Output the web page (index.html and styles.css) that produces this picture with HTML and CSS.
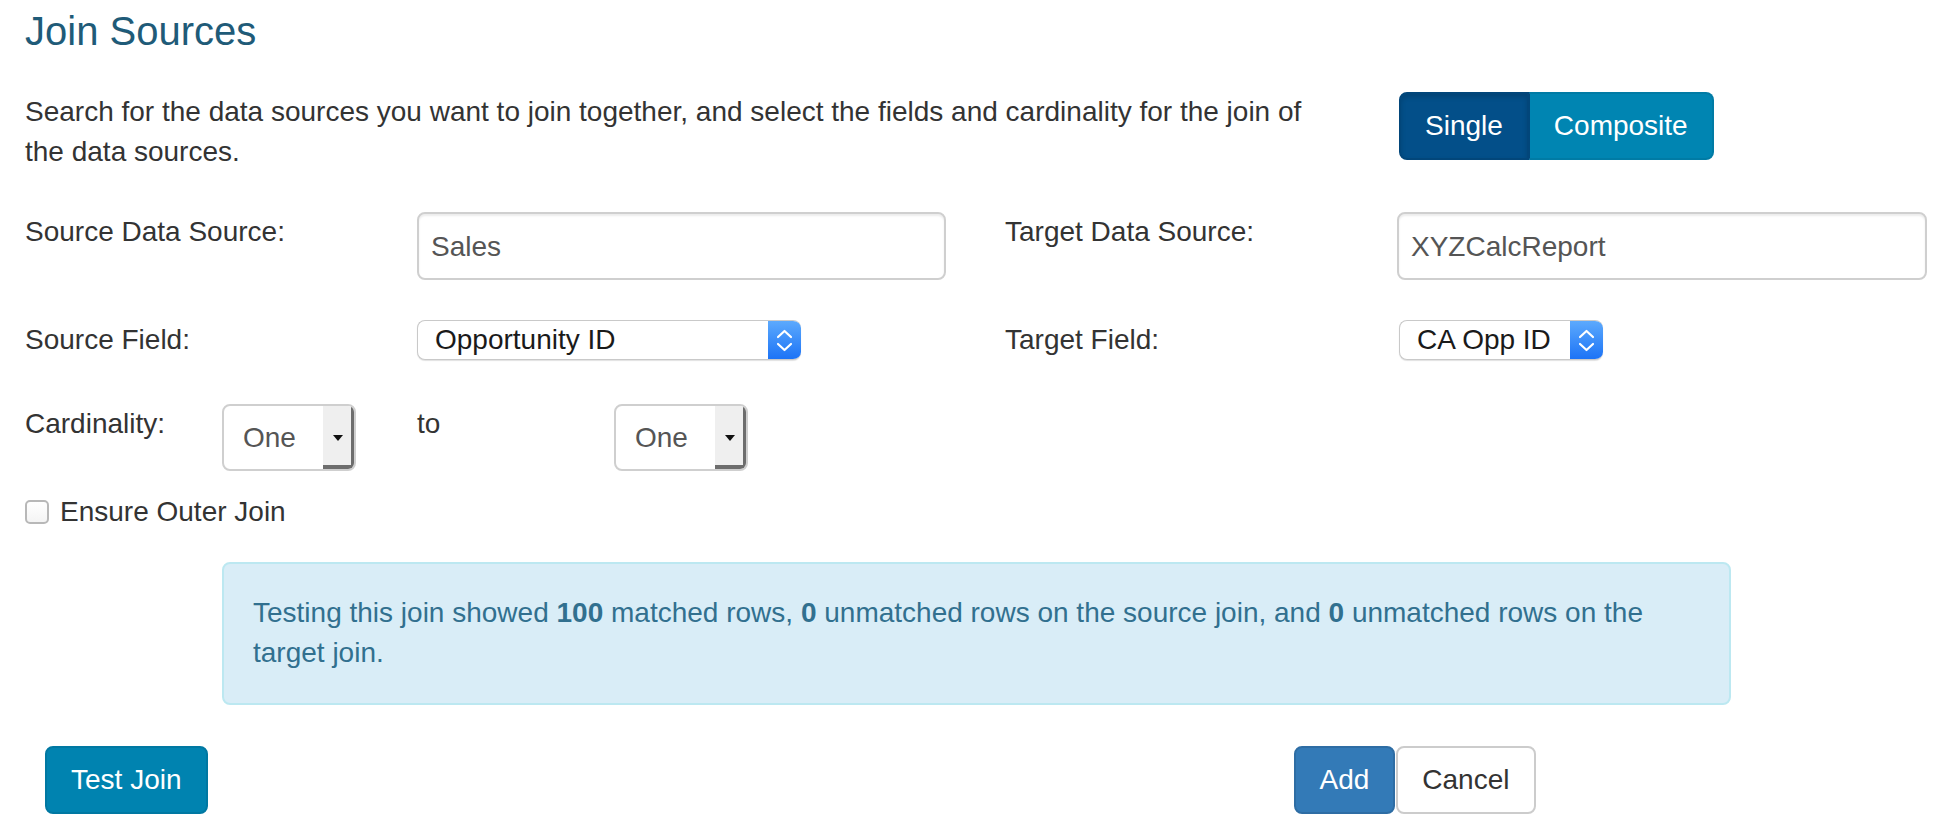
FILE: index.html
```html
<!DOCTYPE html>
<html lang="en">
<head>
<meta charset="utf-8">
<title>Join Sources</title>
<link rel="stylesheet" href="styles.css">
</head>
<body>
<div class="page">
  <h1 class="title">Join Sources</h1>

  <div class="intro-row">
    <p class="intro">Search for the data sources you want to join together, and select the fields and cardinality for the join of the data sources.</p>
    <div class="toggle">
      <button class="seg seg-active" type="button">Single</button>
      <button class="seg seg-plain" type="button">Composite</button>
    </div>
  </div>

  <div class="field-row">
    <div class="pair">
      <label class="label">Source Data Source:</label>
      <input class="text-input" type="text" value="Sales">
    </div>
    <div class="pair pair-right">
      <label class="label">Target Data Source:</label>
      <input class="text-input" type="text" value="XYZCalcReport">
    </div>
  </div>

  <div class="field-row row-select">
    <div class="pair">
      <label class="label">Source Field:</label>
      <div class="mac-select mac-wide">
        <span class="mac-value">Opportunity ID</span>
        <span class="mac-arrow">
          <svg width="33" height="40" viewBox="0 0 33 40"><polyline points="10,17 16.5,11 23,17" fill="none" stroke="#fff" stroke-width="2.2" stroke-linecap="round" stroke-linejoin="round"/><polyline points="10,24 16.5,30 23,24" fill="none" stroke="#fff" stroke-width="2.2" stroke-linecap="round" stroke-linejoin="round"/></svg>
        </span>
      </div>
    </div>
    <div class="pair pair-right">
      <label class="label">Target Field:</label>
      <div class="mac-select mac-narrow">
        <span class="mac-value">CA Opp ID</span>
        <span class="mac-arrow">
          <svg width="33" height="40" viewBox="0 0 33 40"><polyline points="10,17 16.5,11 23,17" fill="none" stroke="#fff" stroke-width="2.2" stroke-linecap="round" stroke-linejoin="round"/><polyline points="10,24 16.5,30 23,24" fill="none" stroke="#fff" stroke-width="2.2" stroke-linecap="round" stroke-linejoin="round"/></svg>
        </span>
      </div>
    </div>
  </div>

  <div class="card-row">
    <span class="card-label">Cardinality:</span>
    <div class="old-select">
      <span class="old-value">One</span>
      <span class="old-arrow"><svg width="10" height="6" viewBox="0 0 10 6"><polygon points="0,0 10,0 5,6" fill="#111"/></svg></span>
    </div>
    <span class="to">to</span>
    <div class="old-select">
      <span class="old-value">One</span>
      <span class="old-arrow"><svg width="10" height="6" viewBox="0 0 10 6"><polygon points="0,0 10,0 5,6" fill="#111"/></svg></span>
    </div>
  </div>

  <label class="check-row">
    <input class="check" type="checkbox">
    <span>Ensure Outer Join</span>
  </label>

  <div class="alert"><span>Testing this join showed </span><b>100</b><span> matched rows, </span><b>0</b><span> unmatched rows on the source join, and </span><b>0</b><span> unmatched rows on the</span> <span>target join.</span></div>

  <div class="actions">
    <button class="btn btn-test" type="button">Test Join</button>
    <div class="final">
      <button class="btn btn-add" type="button">Add</button>
      <button class="btn btn-cancel" type="button">Cancel</button>
    </div>
  </div>
</div>
</body>
</html>
```

FILE: styles.css
```css
* { box-sizing: border-box; }

body {
  margin: 0;
  background: #fff;
  color: #333;
  font-family: "Liberation Sans", Arial, Helvetica, sans-serif;
  font-size: 28px;
  line-height: 40px;
}

.page {
  padding: 0 0 0 25px;
}

.title {
  margin: 9px 0 0;
  font-size: 40px;
  line-height: 44px;
  font-weight: 400;
  color: #1f5b78;
}

.intro-row {
  display: flex;
  align-items: flex-start;
  margin-top: 39px;
}

.intro {
  width: 1315px;
  margin: 0 59px 0 0;
}

.toggle {
  display: flex;
}

.seg {
  font: inherit;
  color: #fff;
  height: 68px;
  padding: 12px 24px;
  border: 2px solid;
  margin: 0;
}

.seg-active {
  background: #034f89;
  border-color: #02467a;
  border-radius: 8px 0 0 8px;
  box-shadow: inset 0 3px 5px rgba(0, 0, 0, 0.15);
}

.seg-plain {
  background: #0085b2;
  border-color: #007ba5;
  border-left-color: #02467a;
  border-left-width: 1px;
  border-radius: 0 8px 8px 0;
}

.field-row {
  display: flex;
  gap: 59px;
  margin-top: 40px;
  height: 68px;
}

.field-row.row-select {
  height: 40px;
}

.pair {
  display: flex;
  align-items: flex-start;
  width: 921px;
}

.pair-right {
  width: 922px;
}

.label {
  flex: none;
  width: 392px;
}

.text-input {
  flex: 1;
  height: 68px;
  margin: 0;
  padding: 2px 12px 0;
  border: 2px solid #cfcfcf;
  border-radius: 8px;
  background: #fff;
  box-shadow: inset 0 2px 2px rgba(0, 0, 0, 0.075);
  font-family: "Liberation Sans", Arial, Helvetica, sans-serif;
  font-size: 28px;
  color: #555;
}

.mac-select {
  display: flex;
  height: 40px;
  border: 1px solid #c9c9c9;
  border-right: none;
  border-radius: 8px;
  overflow: hidden;
  background: #fff;
  box-shadow: 0 1px 1px rgba(0, 0, 0, 0.12);
  color: #1a1a1a;
  font-size: 28px;
}

.mac-wide {
  width: 384px;
}

.mac-narrow {
  width: 204px;
  margin-left: 2px;
}

.mac-value {
  flex: 1;
  display: flex;
  align-items: center;
  padding-left: 17px;
  white-space: nowrap;
}

.mac-arrow {
  flex: none;
  width: 33px;
  height: 40px;
  margin-top: -1px;
  background: linear-gradient(#5eabfd, #1b72f6);
  display: flex;
}

.card-row {
  display: flex;
  align-items: flex-start;
  margin-top: 44px;
  height: 67px;
}

.card-label {
  width: 197px;
  flex: none;
}

.to {
  width: 197px;
  margin-left: 61px;
  flex: none;
}

.old-select {
  display: flex;
  width: 134px;
  height: 67px;
  border: 2px solid #cfcfcf;
  border-radius: 8px;
  overflow: hidden;
  background: #fff;
  font-size: 28px;
  color: #555;
}

.old-value {
  flex: 1;
  display: flex;
  align-items: center;
  padding-left: 19px;
  padding-top: 1px;
}

.old-arrow {
  flex: none;
  width: 31px;
  display: flex;
  align-items: center;
  justify-content: center;
  padding-right: 2px;
  background: #efefef;
  box-shadow: inset -3px -4px 0 #6d6d6d;
}

.check-row {
  display: flex;
  align-items: center;
  gap: 11px;
  margin-top: 21px;
  height: 40px;
}

.check {
  appearance: none;
  -webkit-appearance: none;
  margin: 0;
  width: 24px;
  height: 24px;
  border: 2px solid #b8b8b8;
  border-radius: 5px;
  background: linear-gradient(#fff, #f4f4f4);
}

.alert {
  width: 1509px;
  margin: 30px 0 0 197px;
  padding: 29px 30px 30px 29px;
  border: 2px solid #bce8f1;
  border-radius: 8px;
  background: #d9edf7;
  color: #31708f;
}

.alert b {
  font-weight: 700;
}

.actions {
  display: flex;
  align-items: flex-start;
  margin-top: 41px;
}

.btn {
  font: inherit;
  height: 68px;
  margin: 0;
  padding: 12px 24px;
  border: 2px solid;
  border-radius: 8px;
}

.btn-test {
  margin-left: 20px;
  background: #0083b0;
  border-color: #0078a2;
  color: #fff;
}

.final {
  display: flex;
  gap: 1px;
  margin-left: 1086px;
}

.btn-add {
  background: #337ab7;
  border-color: #2e6da4;
  color: #fff;
}

.btn-cancel {
  background: #fff;
  border-color: #ccc;
  color: #333;
}
```
